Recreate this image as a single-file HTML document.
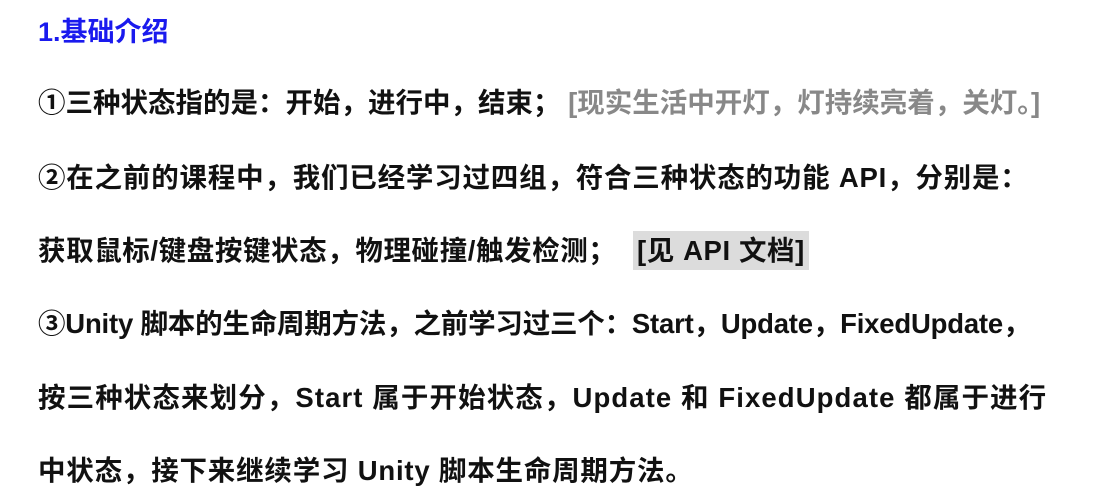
<!DOCTYPE html>
<html><head><meta charset="utf-8"><style>
body{margin:0;width:1112px;height:489px;background:#fff;overflow:hidden;font-family:"Liberation Sans","Noto Sans CJK SC",sans-serif;font-weight:bold;}
.l{position:absolute;left:38px;white-space:nowrap;font-size:27.5px;color:#111;letter-spacing:0.8px;line-height:40px;}
.t{color:#1a1aee;font-size:27px;top:12px;letter-spacing:0;}
.g{color:#888;font-weight:bold;}
.h{background:#dcdcdc;padding:4px 4px;}
</style></head><body>
<div class="l t">1.基础介绍</div>
<div class="l" style="top:83px;letter-spacing:0">①三种状态指的是：开始，进行中，结束；&nbsp;<span class="g">[现实生活中开灯，灯持续亮着，关灯。]</span></div>
<div class="l" style="top:158px">②在之前的课程中，我们已经学习过四组，符合三种状态的功能 API，分别是：</div>
<div class="l" style="top:231px;letter-spacing:0.6px">获取鼠标/键盘按键状态，物理碰撞/触发检测；&nbsp;&nbsp;<span class="h">[见 API 文档]</span></div>
<div class="l" style="top:304px;letter-spacing:-0.2px">③Unity 脚本的生命周期方法，之前学习过三个：Start，Update，FixedUpdate，</div>
<div class="l" style="top:378px;letter-spacing:1.1px">按三种状态来划分，Start 属于开始状态，Update 和 FixedUpdate 都属于进行</div>
<div class="l" style="top:451px">中状态，接下来继续学习 Unity 脚本生命周期方法。</div>
</body></html>
